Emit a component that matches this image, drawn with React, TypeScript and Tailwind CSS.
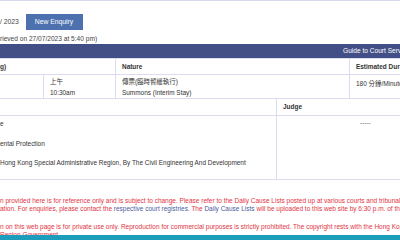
import React from "react";

const font = { fontFamily: '"Liberation Sans", Arial, "Noto Sans CJK TC", sans-serif' };

function Line({ children }: { children: React.ReactNode }) {
  return <div className="h-[8.3px] overflow-hidden whitespace-nowrap leading-[8.3px]">{children}</div>;
}

export default function App() {
  return (
    <div style={font} className="h-[240px] w-[400px] overflow-hidden bg-white text-[6.45px] text-[#333]">
      <div className="h-px bg-[#d6d9ec]" />

      <div className="flex h-[43px] flex-col">
        <div className="mt-[13px] flex h-[16px] items-center">
          <span className="w-[25.5px] whitespace-nowrap text-[6.8px] text-[#444]">/ 2023</span>
          <button className="h-[16px] w-[57px] bg-[#4d71af] text-[6.8px] text-white">New Enquiry</button>
        </div>
        <div className="mt-[4px] whitespace-nowrap text-[6.6px] leading-[9px] text-[#444]">
          rieved on 27/07/2023 at 5:40 pm)
        </div>
      </div>

      <div className="flex h-[14px] items-center overflow-hidden whitespace-nowrap bg-[#424f86] pl-[343px] text-[6.6px] text-white">
        Guide to Court Services
      </div>

      <div className="border-t border-[#dcdcee]">
        <div className="grid h-[16px] grid-cols-[116px_234px_1fr] items-center border-b border-[#dcdcee] font-bold">
          <div className="flex h-full items-center border-r border-[#dcdcee]">g)</div>
          <div className="flex h-full items-center border-r border-[#dcdcee] pl-[6px]">Nature</div>
          <div className="overflow-hidden whitespace-nowrap pl-[6px]">Estimated Duration</div>
        </div>
        <div className="grid h-[24px] grid-cols-[44px_72px_234px_1fr] border-b border-[#dcdcee]">
          <div className="border-r border-[#dcdcee]" />
          <div className="flex flex-col justify-center gap-[2px] border-r border-[#dcdcee] pl-[6px] leading-[9px]">
            <span>上午</span>
            <span>10:30am</span>
          </div>
          <div className="flex flex-col justify-center gap-[2px] whitespace-nowrap border-r border-[#dcdcee] pl-[6px] leading-[9px]">
            <span>傳票(臨時暫緩執行)</span>
            <span>Summons (Interim Stay)</span>
          </div>
          <div className="overflow-hidden whitespace-nowrap pl-[6px] pt-[4px] leading-[9px]">180 分鐘/Minutes</div>
        </div>
        <div className="grid h-[17px] grid-cols-[277px_1fr] items-center border-b border-[#dcdcee] font-bold">
          <div className="h-full border-r border-[#dcdcee]" />
          <div className="pl-[6px]">Judge</div>
        </div>
        <div className="grid h-[64px] grid-cols-[277px_1fr] border-b border-[#dcdcee]">
          <div className="flex flex-col gap-[10.5px] whitespace-nowrap border-r border-[#dcdcee] pt-[3px] leading-[9px]">
            <span>e</span>
            <span>ental Protection</span>
            <span>Hong Kong Special Administrative Region, By The Civil Engineering And Development</span>
          </div>
          <div className="pl-[83px] pt-[2px] leading-[9px] text-[#666]">-----</div>
        </div>
      </div>

      <div className="mt-[17px] text-[6.5px] text-[#e2323f]">
        <Line>n provided here is for reference only and is subject to change. Please refer to the Daily Cause Lists posted up at various courts and tribunals for the latest information.</Line>
        <Line>
          ation. For enquiries, please contact the <span className="text-[#4b5b9e]">respective court registries</span>. The <span className="text-[#4b5b9e]">Daily Cause Lists</span> will be uploaded to this web site by 6:30 p.m. of the day before the hearing.
        </Line>
        <div className="h-[9.4px]" />
        <Line>n on this web page is for private use only. Reproduction for commercial purposes is strictly prohibited. The copyright rests with the Hong Kong Special Administrative</Line>
        <div className="h-[3.5px] overflow-hidden whitespace-nowrap leading-[8.3px]">Region Government.</div>
      </div>
      <div className="h-[6px] bg-[#1c9dbb]" />
    </div>
  );
}
